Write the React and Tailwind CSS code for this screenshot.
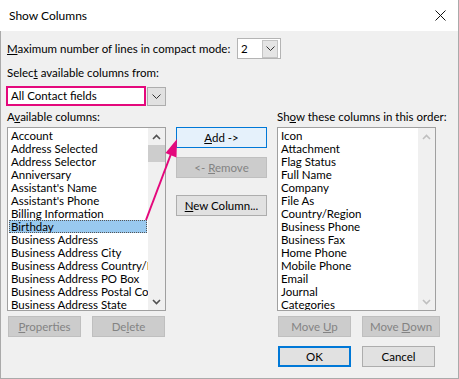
import React from "react";

const leftItems = [
  "Account",
  "Address Selected",
  "Address Selector",
  "Anniversary",
  "Assistant's Name",
  "Assistant's Phone",
  "Billing Information",
  "Birthday",
  "Business Address",
  "Business Address City",
  "Business Address Country/Region",
  "Business Address PO Box",
  "Business Address Postal Code",
  "Business Address State",
];

const rightItems = [
  "Icon",
  "Attachment",
  "Flag Status",
  "Full Name",
  "Company",
  "File As",
  "Country/Region",
  "Business Phone",
  "Business Fax",
  "Home Phone",
  "Mobile Phone",
  "Email",
  "Journal",
  "Categories",
];

function ChevUp({ color = "#444" }) {
  return (
    <svg width="9" height="6" viewBox="0 0 9 6">
      <polyline points="1,5 4.5,1.5 8,5" fill="none" stroke={color} strokeWidth="1.6" />
    </svg>
  );
}
function ChevDown({ color = "#444" }) {
  return (
    <svg width="9" height="6" viewBox="0 0 9 6">
      <polyline points="1,1 4.5,4.5 8,1" fill="none" stroke={color} strokeWidth="1.6" />
    </svg>
  );
}
function ThinChev() {
  return (
    <svg width="9" height="5" viewBox="0 0 9 5">
      <polyline points="0.5,0.5 4.5,4.5 8.5,0.5" fill="none" stroke="#333" strokeWidth="1" />
    </svg>
  );
}

function Btn({ children, className = "" }) {
  return (
    <div className={"flex items-center justify-center h-[21px] whitespace-nowrap " + className}>{children}</div>
  );
}

export default function App() {
  return (
    <div className="w-[459px] h-[379px] bg-white font-['Lato',sans-serif] text-[11.5px] text-black relative overflow-hidden">
      <div className="h-[31px] flex items-center justify-between pl-[9px] pr-[12px] border-r border-[#aaaaaa]">
        <span className="leading-[14px] text-[12px]">Show Columns</span>
        <svg width="11" height="11" viewBox="0 0 11 11">
          <line x1="0.5" y1="0.5" x2="10.5" y2="10.5" stroke="#111" strokeWidth="1" />
          <line x1="10.5" y1="0.5" x2="0.5" y2="10.5" stroke="#111" strokeWidth="1" />
        </svg>
      </div>
      <div className="h-[348px] bg-[#f0f0f0] border-x border-b border-[#aaaaaa] pl-[6px]">
        <div className="pt-[7px] flex items-center h-[28px]">
          <span className="w-[230px] leading-[14px] whitespace-nowrap">
            <u>M</u>aximum number of lines in compact mode:
          </span>
          <div className="w-[44px] h-[21px] border border-[#b4b4b4] bg-white flex items-center pl-[3px] pr-[2px]">
            <span className="leading-[14px]">2</span>
            <div className="ml-auto w-[16px] h-[18px] bg-[#e5e5e5] border border-[#c4c4c4] flex items-center justify-center">
              <ThinChev />
            </div>
          </div>
        </div>
        <div className="mt-[7px] h-[14px] leading-[14px] whitespace-nowrap">
          Selec<u>t</u> available columns from:
        </div>
        <div className="mt-[6px] flex items-start -ml-px">
          <div className="w-[140px] h-[20px] border-2 border-[#e4087c] bg-white flex items-center pl-[3px] leading-[14px]">
            All Contact fields
          </div>
          <div className="ml-px mt-px w-[19px] h-[19px] bg-[#e1e1e1] border border-[#adadad] flex items-center justify-center">
            <ThinChev />
          </div>
        </div>
        <div className="mt-[4px] flex items-start">
          {/* left column */}
          <div className="w-[159px] flex flex-col">
            <div className="h-[14px] leading-[14px] whitespace-nowrap">
              A<u>v</u>ailable columns:
            </div>
            <div className="mt-[3px] h-[184px] border border-[#a0a0a0] bg-white flex">
              <div className="flex-1 pt-px pl-px pr-px overflow-hidden">
                {leftItems.map((it) => (
                  <div
                    key={it}
                    className={
                      "h-[13px] leading-[13px] pl-[2px] whitespace-nowrap " +
                      (it === "Birthday" ? "bg-[#99c9ef] outline-1 outline-dotted outline-[#555] -outline-offset-1" : "")
                    }
                  >
                    {it}
                  </div>
                ))}
              </div>
              <div className="w-[17px] shrink-0 bg-[#f0f0f0] flex flex-col">
                <div className="h-[17px] flex items-center justify-center">
                  <ChevUp color="#505050" />
                </div>
                <div className="h-[17px] bg-[#cdcdcd]" />
                <div className="flex-1" />
                <div className="h-[17px] flex items-center justify-center">
                  <ChevDown color="#505050" />
                </div>
              </div>
            </div>
            <div className="mt-[5px] flex">
              <Btn className="ml-px w-[73px] bg-[#cccccc] border border-[#bfbfbf] text-[#838383]">
                <span>
                  <u>P</u>roperties
                </span>
              </Btn>
              <Btn className="ml-[11px] w-[73px] bg-[#cccccc] border border-[#bfbfbf] text-[#838383]">
                <span>
                  De<u>l</u>ete
                </span>
              </Btn>
            </div>
          </div>
          {/* middle column */}
          <div className="ml-[10px] w-[91px] pt-[17px] flex flex-col">
            <Btn className="bg-[#e5f1fb] border border-[#0078d7]">
              <span>
                <u>A</u>dd -&gt;
              </span>
            </Btn>
            <Btn className="mt-[9px] h-[20px] bg-[#cccccc] border border-[#bfbfbf] text-[#838383]">
              <span>
                &lt;- <u>R</u>emove
              </span>
            </Btn>
            <Btn className="mt-[17px] bg-[#e1e1e1] border border-[#adadad]">
              <span>
                <u>N</u>ew Column...
              </span>
            </Btn>
          </div>
          {/* right column */}
          <div className="ml-[10px] w-[159px] flex flex-col">
            <div className="h-[14px] leading-[14px] whitespace-nowrap">
              Sh<u>o</u>w these columns in this order:
            </div>
            <div className="mt-[3px] h-[184px] border border-[#a0a0a0] bg-white flex">
              <div className="flex-1 pt-px pl-px pr-px overflow-hidden">
                {rightItems.map((it) => (
                  <div key={it} className="h-[13px] leading-[13px] pl-[2px] whitespace-nowrap">
                    {it}
                  </div>
                ))}
              </div>
              <div className="w-[17px] shrink-0 bg-[#f0f0f0] flex flex-col">
                <div className="h-[17px] flex items-center justify-center">
                  <ChevUp color="#bfbfbf" />
                </div>
                <div className="flex-1" />
                <div className="h-[17px] flex items-center justify-center">
                  <ChevDown color="#bfbfbf" />
                </div>
              </div>
            </div>
            <div className="mt-[5px] flex">
              <Btn className="ml-px w-[73px] shrink-0 bg-[#cccccc] border border-[#bfbfbf] text-[#838383]">
                <span>
                  Move <u>U</u>p
                </span>
              </Btn>
              <Btn className="ml-[11px] w-[78px] shrink-0 bg-[#cccccc] border border-[#bfbfbf] text-[#838383]">
                <span>
                  Move <u>D</u>own
                </span>
              </Btn>
            </div>
            <div className="mt-[9px] flex">
              <Btn className="ml-px w-[73px] shrink-0 bg-[#e1e1e1] border-2 border-[#0078d7]">
                <span>OK</span>
              </Btn>
              <Btn className="ml-[11px] w-[73px] shrink-0 bg-[#e1e1e1] border border-[#adadad]">
                <span>Cancel</span>
              </Btn>
            </div>
          </div>
        </div>
      </div>
      <svg className="absolute left-0 top-0 pointer-events-none" width="459" height="379" viewBox="0 0 459 379">
        <line x1="146" y1="220" x2="171" y2="154" stroke="#e4087c" strokeWidth="2" />
        <polygon points="177,139 176.5,157.5 165.5,153" fill="#e4087c" />
      </svg>
    </div>
  );
}
